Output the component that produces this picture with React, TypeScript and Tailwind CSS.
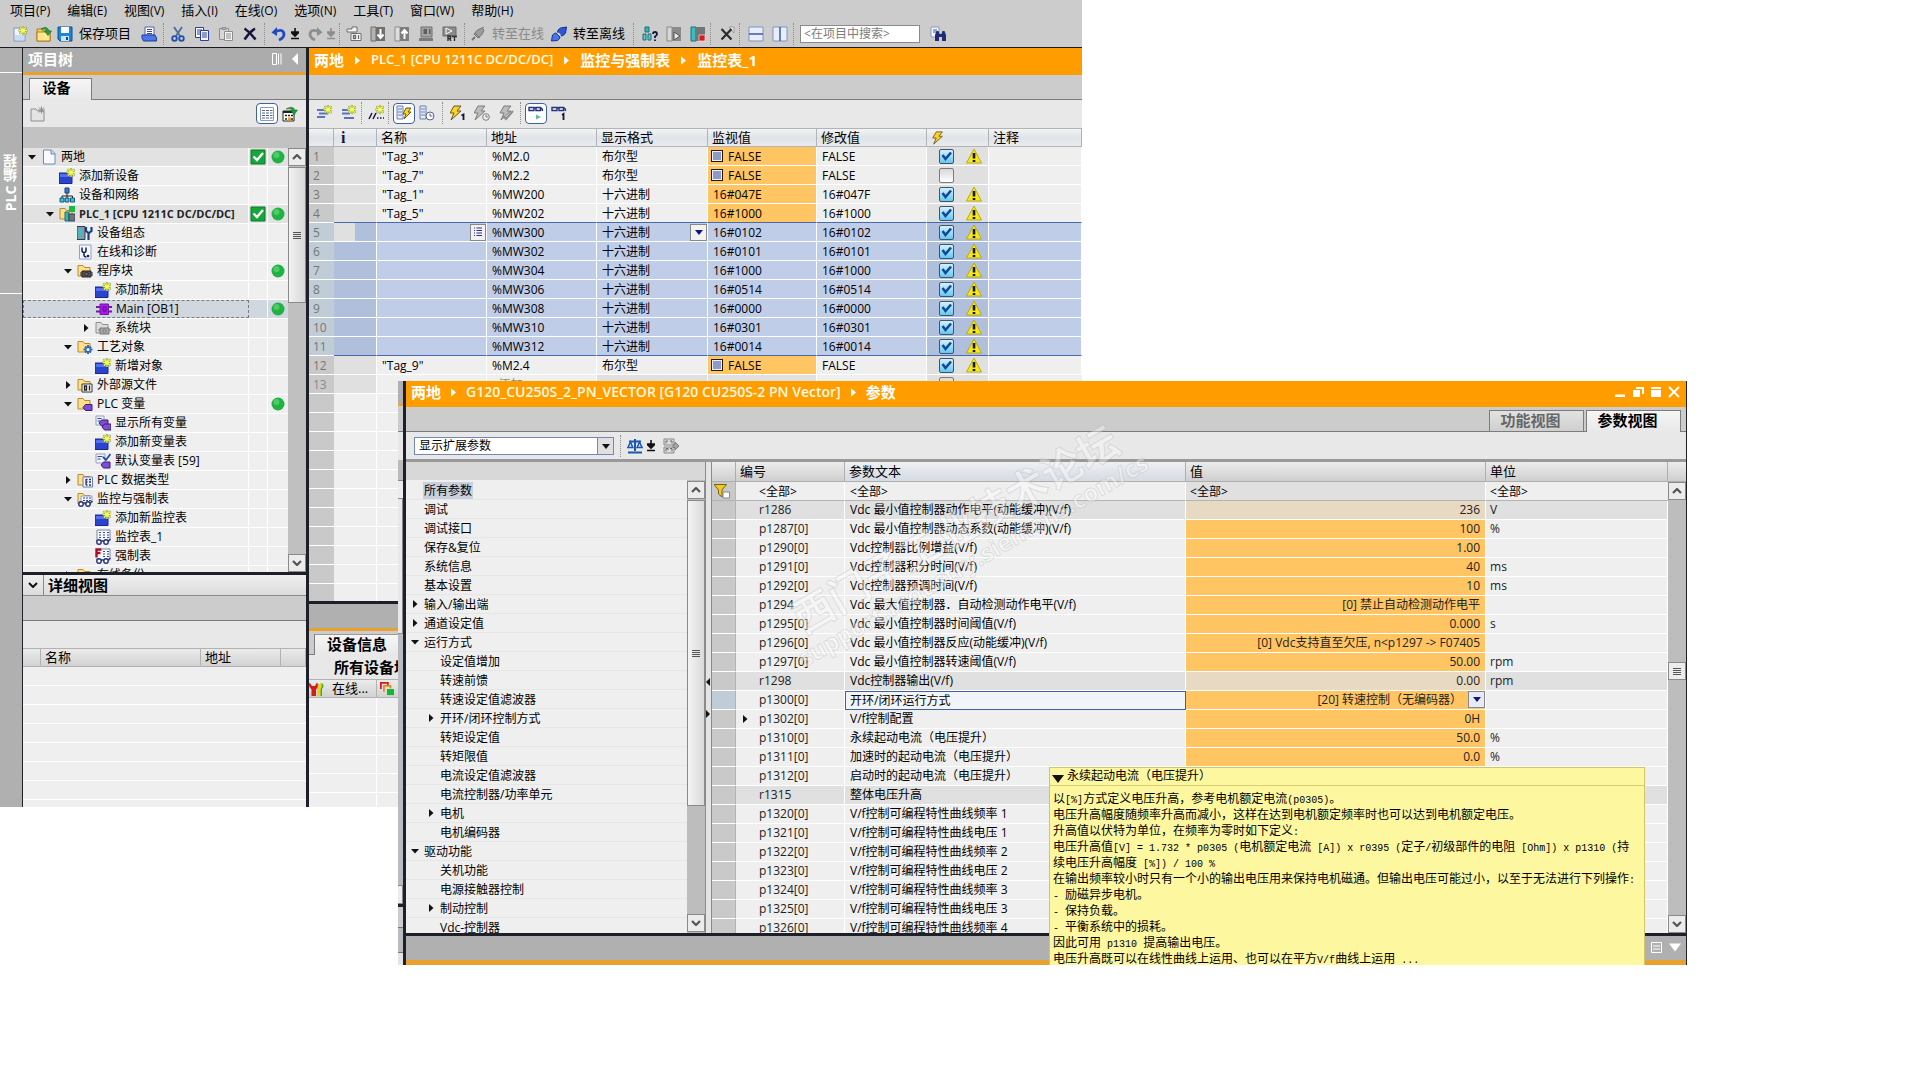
import React from "react";

/* ---------- icons ---------- */

const Star = ({ x = 11, y = 4.5 }: { x?: number; y?: number }) => (
  <g stroke="#6d7f22" strokeWidth="2" strokeLinecap="round">
    <path d={`M${x - 3.8} ${y}h7.6M${x} ${y - 3.8}v7.6M${x - 2.7} ${y - 2.7}l5.4 5.4M${x + 2.7} ${y - 2.7}l-5.4 5.4`} />
    <path
      d={`M${x - 3.8} ${y}h7.6M${x} ${y - 3.8}v7.6M${x - 2.7} ${y - 2.7}l5.4 5.4M${x + 2.7} ${y - 2.7}l-5.4 5.4`}
      stroke="#eefa66"
      strokeWidth="1.3"
    />
  </g>
);
const Folder = ({ gray = false }: { gray?: boolean }) => (
  <path
    d="M1 2.500h5l1.500 2H13V13H1z"
    fill={gray ? "#dcdcdc" : "#ffe08a"}
    stroke={gray ? "#8d8d8d" : "#b98a2c"}
  />
);
const Glasses = () => (
  <g fill="#fff" stroke="#26317c" strokeWidth="1.4">
    <circle cx="4" cy="13" r="2.2" />
    <circle cx="11" cy="13" r="2.2" />
    <path d="M6.2 12.4q1.2-1 2.6 0M13 12l2.4-2" fill="none" />
  </g>
);
const Sheet = () => (
  <g>
    <path d="M2 1h13v11H2z" fill="#f7f8fc" stroke="#7b86ad" />
    <path d="M4 3.5h2M8 3.5h2M12 3.5h2M4 6h2M8 6h2M12 6h2M4 8.500h2M8 8.500h2M12 8.500h2" stroke="#3b4a86" />
  </g>
);
const Tag = ({ x = 7, y = 9 }: { x?: number; y?: number }) => (
  <path d={`M${x} ${y + 3}l2.500-3h6.500v6h-6.500z`} fill="#7d4fd0" stroke="#3c1d7d" />
);
const Bolt = ({ gray = false }: { gray?: boolean }) => (
  <path
    d="M6 1h7L9 6h4L3 15l3-7H2z"
    fill={gray ? "#bdbdbd" : "#f7d32c"}
    stroke={gray ? "#7c7c7c" : "#6f5710"}
  />
);

const icons: Record<string, React.ReactNode> = {
  newProject: (
    <g>
      <path d="M2 2h7l4 4v9H2z" fill="#f2f7ff" stroke="#7c94c4" />
      <path d="M3 9h9v5H3z" fill="#c9dbf6" />
      <Star />
    </g>
  ),
  open: (
    <g>
      <path d="M1 3h5l1 2h7v10H1z" fill="#f6cf5c" stroke="#b07c1c" />
      <path d="M1 6h13v9H1z" fill="#ffe791" stroke="#b07c1c" />
      <path d="M5 3q6-4 8 2h2.500L12 9.500 8.500 5H11Q9.500 2 5 3z" fill="#23a33a" stroke="#0c6a20" strokeWidth=".6" />
    </g>
  ),
  save: (
    <g>
      <path d="M1 1h14v14H3l-2-2z" fill="#1f86d6" stroke="#0d4c94" />
      <path d="M4 1h8v6H4z" fill="#fff" />
      <path d="M4 10h8v5H4z" fill="#cfe4f6" />
      <path d="M9 11h2v3H9z" fill="#0d4c94" />
    </g>
  ),
  print: (
    <g>
      <path d="M4 1h9v8H4z" fill="#fff" stroke="#56639c" />
      <path d="M6 3.500h5M6 5.500h5M6 7.500h5" stroke="#3449a0" />
      <path d="M1 9h13l1.500 3v3H2.500L1 12z" fill="#4d76e6" stroke="#1b3ba0" />
    </g>
  ),
  cut: (
    <g fill="none" strokeWidth="1.8">
      <path d="M4 1l6 9M12 1L6 10" stroke="#4a6c98" />
      <circle cx="4.500" cy="12.500" r="2.300" stroke="#1c4fae" />
      <circle cx="11.500" cy="12.500" r="2.300" stroke="#1c4fae" />
    </g>
  ),
  copy: (
    <g stroke="#2b3f9a">
      <path d="M1.500 1.500h8v10h-8z" fill="#fff" />
      <path d="M3 4h5M3 6h5M3 8h5" />
      <path d="M6.500 4.500h8v10h-8z" fill="#f4f7ff" />
      <path d="M8 7h5M8 9h5M8 11h5" />
    </g>
  ),
  paste: (
    <g stroke="#8c8c8c">
      <path d="M1.500 2.500h9v11h-9z" fill="#d8d8d8" />
      <path d="M4 1.500h4v2H4z" fill="#bbb" />
      <path d="M6.500 5.500h8v9h-8z" fill="#f6f6f6" />
      <path d="M8 8h5M8 10h5M8 12h5" />
    </g>
  ),
  x: <path d="M2.500 2.500q6 4 11 11M13 2.500q-6 4-10.500 11" stroke="#14143c" strokeWidth="2.400" fill="none" />,
  undo: (
    <g>
      <path d="M4 6q8-4 9 2 0 4-5 6" fill="none" stroke="#2249c4" strokeWidth="2.800" />
      <path d="M.5 6.500L6 1v9z" fill="#2249c4" />
    </g>
  ),
  redo: (
    <g>
      <path d="M12 6q-8-4-9 2 0 4 5 6" fill="none" stroke="#8e8e8e" strokeWidth="2.800" />
      <path d="M15.500 6.500L10 1v9z" fill="#8e8e8e" />
    </g>
  ),
  compile: (
    <g stroke="#6c6c6c">
      <path d="M1 3h5V1h5v5H1z" fill="#f4f4f4" />
      <path d="M5 7.500h10v7H5z" fill="#fff" />
      <path d="M7.500 9.500h2v3h-2zM12.500 9v4" fill="none" strokeWidth="1.400" />
    </g>
  ),
  download: (
    <g>
      <path d="M1 1h5v14H1z" fill="#b4b4b4" stroke="#6b6b6b" />
      <path d="M6 1h9v14H6z" fill="#6f6f6f" />
      <path d="M10.500 3v8M7.500 8.500l3 3.500 3-3.500" stroke="#fff" strokeWidth="2" fill="none" />
    </g>
  ),
  upload: (
    <g>
      <path d="M1 1h5v14H1z" fill="#dedede" stroke="#8b8b8b" />
      <path d="M6 1h9v14H6z" fill="#7d7d7d" />
      <path d="M10.500 13V5M7.500 7.500l3-3.500 3 3.500" stroke="#fff" strokeWidth="2" fill="none" />
    </g>
  ),
  sim: (
    <g>
      <path d="M3 1h11v10H3z" fill="#a4a4a4" stroke="#6f6f6f" />
      <path d="M5.500 3h3.500v5H5.500zM11 3h1.500v5H11z" fill="#5f5f5f" />
      <path d="M1 12h14v3H1z" fill="#7b7b7b" />
    </g>
  ),
  rt: (
    <g>
      <path d="M1 1h13v9H1z" fill="#8a8a8a" stroke="#6a6a6a" />
      <path d="M4 2l6 3-6 3z" fill="none" stroke="#fff" />
      <path d="M6 15v-5h2.500v2.500H6M7.500 12.500L9 15M10 10.500h5M12.500 10.500V15" stroke="#2f2f2f" strokeWidth="1.400" fill="none" />
    </g>
  ),
  plugGray: (
    <g>
      <path d="M2 14l3-3" stroke="#777" strokeWidth="2" />
      <path d="M4 8q3-5 8-6l2 2q-1 5-6 8z" fill="#9c9c9c" stroke="#777" />
      <path d="M5 7l5 5M12 2l2-1" stroke="#777" />
    </g>
  ),
  plugBlue: (
    <g strokeLinejoin="round">
      <path d="M15.500 1l-1 6q-2 3-4 3L6.500 6q0-2.500 3-4z" fill="#3454d4" stroke="#15308f" />
      <path d="M.5 15l1-6q2-2 3.500-2L9 11q0 2-2.500 3.500z" fill="#4d74ea" stroke="#15308f" />
      <path d="M7 7l2.500 2.500" stroke="#dfe8ff" strokeWidth="1.500" />
    </g>
  ),
  access: (
    <g>
      <path d="M3 1h4v5H3z" fill="#35b7b0" stroke="#1b6f78" />
      <path d="M1 8h3v6H1zM6 8h3v6H6z" fill="#58c8c2" stroke="#1b6f78" />
      <path d="M11 8q0-2 2-2t2 2q0 1.500-2 2.500v1.500M13 13.500v1.500" stroke="#14143c" strokeWidth="1.800" fill="none" />
    </g>
  ),
  startCpu: (
    <g>
      <path d="M1 1h5v14H1z" fill="#d7d7d7" stroke="#888" />
      <path d="M6 1h9v14H6z" fill="#8a8a8a" />
      <path d="M8 6l6 4-6 4z" fill="#e9e9e9" stroke="#555" />
    </g>
  ),
  stopCpu: (
    <g>
      <path d="M1 1h5v14H1z" fill="#37c0bd" stroke="#1b6f78" />
      <path d="M6 1h9v14H6z" fill="#70767a" />
      <path d="M9 9h6v6H9z" fill="#e11717" stroke="#fff" strokeWidth=".6" />
    </g>
  ),
  cross: (
    <g>
      <path d="M10 1h5v6z" fill="#eee" stroke="#999" />
      <path d="M2.500 3l10 10.500M12.500 3l-10 10.500" stroke="#2b2b2b" strokeWidth="2.200" />
    </g>
  ),
  splitH: (
    <g stroke="#8290c4">
      <path d="M1 1h14v14H1z" fill="#e9eefb" />
      <path d="M1 8h14" stroke="#4052a8" strokeWidth="1.500" />
    </g>
  ),
  splitV: (
    <g stroke="#8290c4">
      <path d="M1 1h14v14H1z" fill="#e9eefb" />
      <path d="M8 1v14" stroke="#4052a8" strokeWidth="1.500" />
    </g>
  ),
  find: (
    <g>
      <path d="M1 1h8v10H1z" fill="#f2f5fc" stroke="#8c99c6" />
      <path d="M3 4h4M3 6h4" stroke="#4052a8" />
      <path d="M5 15V9l1.500-4h2L9.500 8h2l1-3h2L16 9v6h-4v-4H9v4z" fill="#1f2b73" />
    </g>
  ),
  folderNew: (
    <g>
      <path d="M1 3h5l1.500 2H14v10H1z" fill="#e4e4e4" stroke="#8c8c8c" />
      <path d="M8 4h7M11.500 .5v7M9 1.500l5 5M14 1.500l-5 5" stroke="#8c8c8c" />
    </g>
  ),
  listView: (
    <g>
      <path d="M1.500 1.500h13v13h-13z" fill="#fff" stroke="#8a99c4" />
      <path d="M3 4.500h3M7 4.500h3M11 4.500h2.500M3 7h3M7 7h3M11 7h2.500M3 9.500h3M7 9.500h3M11 9.500h2.500M3 12h3M7 12h3M11 12h2.500" stroke="#51628f" />
    </g>
  ),
  gridGo: (
    <g>
      <path d="M1 5h11v10H1z" fill="#fff" stroke="#222" />
      <path d="M1 5h11v2H1z" fill="#222" />
      <path d="M3 9.500h2M6 9.500h2M9 9.500h2M3 13h2M9 13h2" stroke="#222" strokeWidth="1.500" />
      <path d="M6 11.500h3v3H6z" fill="#f09a20" />
      <path d="M4 3q7-4 9 1h2.500L12 9 8.500 4H11Q9 2 4 3z" fill="#1f9c38" stroke="#0c6a20" strokeWidth=".5" />
    </g>
  ),
  rowAdd: (
    <g>
      <path d="M1 5h8M3 8.500h9M1 12h8" stroke="#5975c0" strokeWidth="2" />
      <Star x={12} />
    </g>
  ),
  rowIns: (
    <g>
      <path d="M2 5h6M2 8.500h8M4 13h10" stroke="#5975c0" strokeWidth="2" />
      <Star x={12} />
    </g>
  ),
  comment: (
    <g>
      <path d="M1 14l3-6M5 14l3-6" stroke="#14143c" strokeWidth="1.500" />
      <path d="M9 13h1.500M12 13h1.500M15 13h1" stroke="#14143c" strokeWidth="1.500" />
      <Star x={12} />
    </g>
  ),
  listBolt: (
    <g>
      <path d="M1 1h6v13H1z" fill="#e5ebf9" stroke="#6a7db5" />
      <path d="M2 4h4M2 7h4M2 10h4" stroke="#6a7db5" />
      <path d="M10 3h5l-3 4h3l-7 7 2-5H7z" fill="#f7d32c" stroke="#6f5710" />
    </g>
  ),
  listClock: (
    <g>
      <path d="M1 1h6v13H1z" fill="#e5ebf9" stroke="#6a7db5" />
      <path d="M2 4h4M2 7h4M2 10h4" stroke="#6a7db5" />
      <circle cx="11" cy="11" r="4" fill="#fff" stroke="#51628f" />
      <path d="M11 8.500V11h2.500" stroke="#51628f" fill="none" />
    </g>
  ),
  bolt: <Bolt />,
  bolt1: (
    <g>
      <g transform="translate(-2 0)">
        <Bolt />
      </g>
      <path d="M11.500 10.500l2-1V15" stroke="#14143c" strokeWidth="1.800" fill="none" />
    </g>
  ),
  boltClock: (
    <g>
      <g transform="translate(-2 0)">
        <Bolt gray />
      </g>
      <circle cx="12" cy="12" r="3.300" fill="#eee" stroke="#7c7c7c" />
      <path d="M12 10v2h2" stroke="#7c7c7c" fill="none" />
    </g>
  ),
  boltCheck: (
    <g>
      <Bolt gray />
      <path d="M5 11l3 3 7-8" stroke="#8c8c8c" strokeWidth="2" fill="none" />
    </g>
  ),
  glassPlay: (
    <g>
      <path d="M1 2.500h5v3H1zM8 2.500h4.500v3H8zM6 3h2M12.500 3q2 0 2 3" fill="#fff" stroke="#26317c" strokeWidth="1.400" />
      <path d="M8 9.500l5 2.500-5 2.500z" fill="#5fc486" />
    </g>
  ),
  glassOne: (
    <g>
      <path d="M1 2.500h5v3H1zM8 2.500h4.500v3H8zM6 3h2M12.500 3q2 0 2 3" fill="#fff" stroke="#26317c" strokeWidth="1.400" />
      <path d="M11 10l1.500-1v6" stroke="#14143c" strokeWidth="1.800" fill="none" />
    </g>
  ),
  page: (
    <g>
      <path d="M2.500 1h8l3.500 3.500V15h-11.500z" fill="#f8faff" stroke="#7087b8" />
      <path d="M10 1v4h4" fill="#c6d5f0" stroke="#7087b8" />
    </g>
  ),
  add: (
    <g>
      <path d="M0 5h13v10.500H0z" fill="#2b43cf" stroke="#182a8c" />
      <path d="M1 6h11v3H1z" fill="#5470ee" />
      <Star x={12} />
    </g>
  ),
  network: (
    <g>
      <path d="M8 5v4M3 11V9h10.500v2M8 9v2" stroke="#222" fill="none" />
      <path d="M6 1h4v5H6z" fill="#3c78c8" stroke="#1d3f7c" />
      <path d="M1 11h4v4H1zM6 11h4v4H6zM11.500 11h4v4h-4z" fill="#3fbfcf" stroke="#1d5c7c" />
    </g>
  ),
  plc: (
    <g>
      <Folder />
      <path d="M6 6h4v9H6z" fill="#38b4b4" stroke="#1b6f78" />
      <path d="M10 8h6v7h-6z" fill="#6d757c" stroke="#3c4348" />
      <path d="M10 0h6v6h-6z" fill="#16bf3e" />
    </g>
  ),
  config: (
    <g>
      <path d="M0 1.500h8v13H0z" fill="#8a97a5" stroke="#2f3e50" />
      <path d="M1.500 3H5v10H1.500z" fill="#37c0c6" />
      <path d="M9 2v4l2.500 2v7M14.500 2v4l-2.500 2" stroke="#1d3f7c" strokeWidth="2.200" fill="none" />
    </g>
  ),
  diag: (
    <g>
      <path d="M2.500 1h11.500v14H2.500z" fill="#f4f7ff" stroke="#8ea0cc" />
      <path d="M5 3.500v3q0 2 2 2t2-2v-3M7 9v2q0 2 2.500 2" stroke="#14204c" strokeWidth="1.500" fill="none" />
      <circle cx="11" cy="12" r="1.300" fill="#14204c" />
    </g>
  ),
  blocks: (
    <g>
      <Folder />
      <path d="M5 8h9v6H5z" fill="#555" stroke="#222" />
      <path d="M3 10h2M14 10h2M3 12h2M14 12h2M8 10h3v2H8z" stroke="#222" fill="#ccc" />
    </g>
  ),
  main: (
    <g>
      <path d="M0 6h16M0 10.500h16" stroke="#6d1f9c" strokeWidth="1.800" />
      <path d="M4 3h8.500v10.500H4z" fill="#a51be8" stroke="#7d10b4" />
      <path d="M7 6h3v4H7z" fill="none" stroke="#5b0d86" />
    </g>
  ),
  sysBlocks: (
    <g>
      <Folder gray />
      <path d="M5 8h9v6H5z" fill="#a9a9a9" stroke="#777" />
      <path d="M3 10h2M14 10h2M8 10h3v2H8z" stroke="#777" fill="#ddd" />
    </g>
  ),
  tech: (
    <g>
      <Folder />
      <path d="M11 6v9M6.500 10.500h9M8 7.500l6 6M14 7.500l-6 6" stroke="#2f67b8" strokeWidth="2" />
      <circle cx="11" cy="10.500" r="1.500" fill="#fff" />
    </g>
  ),
  source: (
    <g>
      <Folder />
      <path d="M5 7h10v8H5z" fill="#fff" stroke="#333" />
      <path d="M7.500 9h2v4h-2zM12.500 8.500v5" stroke="#222" fill="none" strokeWidth="1.400" />
    </g>
  ),
  plcVars: (
    <g>
      <Folder />
      <Tag x={6} y={8.500} />
    </g>
  ),
  showVars: (
    <g>
      <path d="M1 1h8v9H1z" fill="#eef2fc" stroke="#8ea0cc" />
      <path d="M2.500 3.500h4M2.500 6h3" stroke="#3b4a86" />
      <Tag x={4} y={5} />
      <Tag x={7} y={9} />
    </g>
  ),
  varTable: (
    <g>
      <path d="M1 1h9v9H1z" fill="#eef2fc" stroke="#8ea0cc" />
      <path d="M2.500 3.500h5M2.500 6h3" stroke="#3b4a86" />
      <path d="M8 4l3 3 4.500-6" stroke="#2249a4" strokeWidth="1.800" fill="none" />
      <Tag x={6} y={9} />
    </g>
  ),
  types: (
    <g>
      <Folder />
      <path d="M6 5h9.500v10H6z" fill="#f1f5ff" stroke="#6a7db5" />
      <path d="M9 7v6M9 7.500h1.500M9 10h1.500M9 13h1.500M12 7.500h2M12 10h2M12 13h2" stroke="#26317c" strokeWidth="1.300" />
    </g>
  ),
  watchFolder: (
    <g>
      <Folder />
      <path d="M4 5h11v7H4z" fill="#f4f7ff" stroke="#8ea0cc" />
      <path d="M6 7h2M9 7h2M12 7h2M6 9.500h2M9 9.500h2M12 9.500h2" stroke="#3b4a86" />
      <Glasses />
    </g>
  ),
  watch: (
    <g>
      <Sheet />
      <Glasses />
    </g>
  ),
  force: (
    <g>
      <Sheet />
      <path d="M0 0h7v10H0z" fill="#f7f8fc" />
      <path d="M1.500 9.500V1.500h5M1.500 5h4" stroke="#a40f24" strokeWidth="2.400" fill="none" />
      <Glasses />
    </g>
  ),
  folder: <Folder />,
  balance: (
    <g stroke="#1d56b0" fill="none" strokeWidth="1.500">
      <path d="M8 1v12M2 3.500h12M1 14.500h14" strokeWidth="2" />
      <path d="M3.500 4L.8 9.500h5zM12.500 4l-2.400 5.500h5z" fill="#cfe0f6" />
    </g>
  ),
  paramGo: (
    <g>
      <path d="M1 1h10v6H1zM1 9h10v6H1z" fill="#ddd" stroke="#8a8a8a" />
      <path d="M3 5.500V3h2M7 3h2v2.500M3 13.500v-3h2v1.500M7 10.500h2v3" stroke="#666" fill="none" />
      <path d="M10 6.500h2V4l4 4-4 4V9.500h-2z" fill="#a5a5a5" stroke="#7f7f7f" />
    </g>
  ),
  filter: (
    <g>
      <path d="M0 1.500h12.500L8 7v7l-3.500-3V7z" fill="#f2c822" stroke="#7d6410" />
      <path d="M9 9h6.500v6H9z" fill="#fff" stroke="#888" />
    </g>
  ),
  warn: (
    <g>
      <path d="M8 1l7.500 14H.5z" fill="#f6e81c" stroke="#b9ab10" />
      <path d="M8 5v5.500M8 12v2" stroke="#16160a" strokeWidth="2.600" />
    </g>
  ),
  ok: (
    <g>
      <path d="M1 1h14v14H1z" fill="#17a63b" stroke="#0d7a28" />
      <path d="M3.500 7.500l3.500 3.500L13 4" stroke="#fff" strokeWidth="2.400" fill="none" />
    </g>
  ),
  dot: (
    <g>
      <circle cx="8" cy="8" r="6.500" fill="#22b145" />
      <circle cx="6.500" cy="6" r="3" fill="#4ccb68" />
    </g>
  ),
  wrench: (
    <g strokeLinejoin="round">
      <path d="M10 15V8Q8 6.500 8 2l2.500 2.500L13 2q3 3 0 6v7z" fill="#35b23c" />
      <path d="M8 15V8Q6 6 7 2l2 2.500L12 2q2 3-.500 6v7z" fill="#f2cf1d" />
      <path d="M2.500 15V8.500Q-1 6 .5 1.500L3 5h3l2-3.500Q10 6 7 8.500V15z" fill="#d01c1c" />
    </g>
  ),
  squares: (
    <g>
      <path d="M1 8V1h8v3M1 1h8" stroke="#d01c1c" strokeWidth="2" fill="none" />
      <path d="M4.500 11V4.500H12V7" stroke="#e88b18" strokeWidth="2" fill="none" />
      <path d="M8 8h8v7H8z" fill="#12b83c" />
    </g>
  ),
};

const Icon = ({ n, s = 16 }: { n: string; s?: number }) => (
  <svg viewBox="0 0 16 16" width={s} height={s} className="shrink-0" aria-hidden="true">
    {icons[n]}
  </svg>
);

/* ---------- small parts ---------- */

const Tool = ({ n, label, on }: { n: string; label: string; on?: boolean }) => (
  <button
    aria-label={label}
    className={
      on
        ? "flex h-[21px] w-[22px] shrink-0 items-center justify-center rounded-sm border border-[#3c62a4] bg-white"
        : "flex h-[21px] w-6 shrink-0 items-center justify-center"
    }
  >
    <Icon n={n} />
  </button>
);
const Sep = () => <span className="h-[22px] shrink-0 border-l border-dotted border-[#8c8c8c]" />;
const UpDown = ({ gray }: { gray?: boolean }) => (
  <svg viewBox="0 0 8 12" width="8" height="12" className="shrink-0" aria-hidden="true">
    <path d="M4 0v4M0 4h8L4 8zM0 10.500h8" fill={gray ? "#8e8e8e" : "#111"} stroke={gray ? "#8e8e8e" : "#111"} strokeWidth="1.600" />
  </svg>
);
const Chevron = () => (
  <svg viewBox="0 0 6 10" width="5" height="9" className="shrink-0" aria-hidden="true">
    <path d="M0 0l6 5-6 5z" fill="#fff" />
  </svg>
);
const Twist = ({ open }: { open: boolean }) => (
  <svg viewBox="0 0 10 10" width="10" height="10" className="shrink-0" aria-hidden="true">
    <path d={open ? "M1 3h8L5 7.500z" : "M3 1v8l4.500-4z"} fill="#111" />
  </svg>
);

const ScrollBtn = ({ up }: { up?: boolean }) => (
  <button
    aria-label={up ? "Scroll up" : "Scroll down"}
    className="flex h-[18px] w-full shrink-0 items-center justify-center border border-[#8a8a8a] bg-[#ececec]"
  >
    <svg viewBox="0 0 10 6" width="10" height="6" aria-hidden="true">
      <path d={up ? "M1 5l4-4 4 4" : "M1 1l4 4 4-4"} stroke="#555" strokeWidth="2.200" fill="none" />
    </svg>
  </button>
);
const Grip = () => (
  <span className="flex w-2 flex-col gap-px">
    <i className="h-px bg-[#555]" />
    <i className="h-px bg-[#555]" />
    <i className="h-px bg-[#555]" />
    <i className="h-px bg-[#555]" />
  </span>
);

const Check = ({ on, label }: { on: boolean; label: string }) => (
  <label className="relative flex h-[15px] w-[15px] shrink-0">
    <input
      type="checkbox"
      aria-label={label}
      defaultChecked={on}
      className="peer h-full w-full appearance-none rounded-xs border border-[#7c7c7c] bg-linear-to-b from-[#d8d8d8] to-white checked:border-[#3f5568] checked:from-[#d4effc] checked:to-[#62c8f2]"
    />
    <svg viewBox="0 0 15 15" className="pointer-events-none absolute inset-0 hidden peer-checked:block" aria-hidden="true">
      <path d="M3.500 6l3 4L12 3.500" stroke="#0d4a9c" strokeWidth="2.600" fill="none" />
    </svg>
  </label>
);

/* ---------- data ---------- */

type Node = { t: string; l: number; i: string; o?: boolean; ok?: boolean; dot?: boolean; bold?: boolean; sel?: boolean };
const tree: Node[] = [
  { t: "两地", l: 0, i: "page", o: true, ok: true, dot: true },
  { t: "添加新设备", l: 1, i: "add" },
  { t: "设备和网络", l: 1, i: "network" },
  { t: "PLC_1 [CPU 1211C DC/DC/DC]", l: 1, i: "plc", o: true, ok: true, dot: true, bold: true },
  { t: "设备组态", l: 2, i: "config" },
  { t: "在线和诊断", l: 2, i: "diag" },
  { t: "程序块", l: 2, i: "blocks", o: true, dot: true },
  { t: "添加新块", l: 3, i: "add" },
  { t: "Main [OB1]", l: 3, i: "main", dot: true, sel: true },
  { t: "系统块", l: 3, i: "sysBlocks", o: false },
  { t: "工艺对象", l: 2, i: "tech", o: true },
  { t: "新增对象", l: 3, i: "add" },
  { t: "外部源文件", l: 2, i: "source", o: false },
  { t: "PLC 变量", l: 2, i: "plcVars", o: true, dot: true },
  { t: "显示所有变量", l: 3, i: "showVars" },
  { t: "添加新变量表", l: 3, i: "add" },
  { t: "默认变量表 [59]", l: 3, i: "varTable" },
  { t: "PLC 数据类型", l: 2, i: "types", o: false },
  { t: "监控与强制表", l: 2, i: "watchFolder", o: true },
  { t: "添加新监控表", l: 3, i: "add" },
  { t: "监控表_1", l: 3, i: "watch" },
  { t: "强制表", l: 3, i: "force" },
  { t: "在线备份", l: 2, i: "folder", o: false },
];
const indent = ["pl-1", "pl-[22px]", "pl-10", "pl-[58px]"];

const watch: [string, string, string, string, string, boolean][] = [
  ['"Tag_3"', "%M2.0", "布尔型", "FALSE", "FALSE", true],
  ['"Tag_7"', "%M2.2", "布尔型", "FALSE", "FALSE", false],
  ['"Tag_1"', "%MW200", "十六进制", "16#047E", "16#047F", true],
  ['"Tag_5"', "%MW202", "十六进制", "16#1000", "16#1000", true],
  ["", "%MW300", "十六进制", "16#0102", "16#0102", true],
  ["", "%MW302", "十六进制", "16#0101", "16#0101", true],
  ["", "%MW304", "十六进制", "16#1000", "16#1000", true],
  ["", "%MW306", "十六进制", "16#0514", "16#0514", true],
  ["", "%MW308", "十六进制", "16#0000", "16#0000", true],
  ["", "%MW310", "十六进制", "16#0301", "16#0301", true],
  ["", "%MW312", "十六进制", "16#0014", "16#0014", true],
  ['"Tag_9"', "%M2.4", "布尔型", "FALSE", "FALSE", true],
];

const groups: { t: string; l?: number; o?: boolean }[] = [
  { t: "所有参数" },
  { t: "调试" },
  { t: "调试接口" },
  { t: "保存&复位" },
  { t: "系统信息" },
  { t: "基本设置" },
  { t: "输入/输出端", o: false },
  { t: "通道设定值", o: false },
  { t: "运行方式", o: true },
  { t: "设定值增加", l: 1 },
  { t: "转速前馈", l: 1 },
  { t: "转速设定值滤波器", l: 1 },
  { t: "开环/闭环控制方式", l: 1, o: false },
  { t: "转矩设定值", l: 1 },
  { t: "转矩限值", l: 1 },
  { t: "电流设定值滤波器", l: 1 },
  { t: "电流控制器/功率单元", l: 1 },
  { t: "电机", l: 1, o: false },
  { t: "电机编码器", l: 1 },
  { t: "驱动功能", o: true },
  { t: "关机功能", l: 1 },
  { t: "电源接触器控制", l: 1 },
  { t: "制动控制", l: 1, o: false },
  { t: "Vdc-控制器", l: 1 },
];

const params: [string, string, string, string][] = [
  ["r1286", "Vdc 最小值控制器动作电平(动能缓冲)(V/f)", "236", "V"],
  ["p1287[0]", "Vdc 最小值控制器动态系数(动能缓冲)(V/f)", "100", "%"],
  ["p1290[0]", "Vdc控制器比例增益(V/f)", "1.00", ""],
  ["p1291[0]", "Vdc控制器积分时间(V/f)", "40", "ms"],
  ["p1292[0]", "Vdc控制器预调时间(V/f)", "10", "ms"],
  ["p1294", "Vdc 最大值控制器．自动检测动作电平(V/f)", "[0] 禁止自动检测动作电平", ""],
  ["p1295[0]", "Vdc 最小值控制器时间阈值(V/f)", "0.000", "s"],
  ["p1296[0]", "Vdc 最小值控制器反应(动能缓冲)(V/f)", "[0] Vdc支持直至欠压, n<p1297 -> F07405", ""],
  ["p1297[0]", "Vdc 最小值控制器转速阈值(V/f)", "50.00", "rpm"],
  ["r1298", "Vdc控制器输出(V/f)", "0.00", "rpm"],
  ["p1300[0]", "开环/闭环运行方式", "[20] 转速控制（无编码器）", ""],
  ["p1302[0]", "V/f控制配置", "0H", ""],
  ["p1310[0]", "永续起动电流（电压提升）", "50.0", "%"],
  ["p1311[0]", "加速时的起动电流（电压提升）", "0.0", "%"],
  ["p1312[0]", "启动时的起动电流（电压提升）", "", ""],
  ["r1315", "整体电压升高", "", ""],
  ["p1320[0]", "V/f控制可编程特性曲线频率 1", "", ""],
  ["p1321[0]", "V/f控制可编程特性曲线电压 1", "", ""],
  ["p1322[0]", "V/f控制可编程特性曲线频率 2", "", ""],
  ["p1323[0]", "V/f控制可编程特性曲线电压 2", "", ""],
  ["p1324[0]", "V/f控制可编程特性曲线频率 3", "", ""],
  ["p1325[0]", "V/f控制可编程特性曲线电压 3", "", ""],
  ["p1326[0]", "V/f控制可编程特性曲线频率 4", "", ""],
];

const help = [
  "以[%]方式定义电压升高，参考电机额定电流(p0305)。",
  "电压升高幅度随频率升高而减小，这样在达到电机额定频率时也可以达到电机额定电压。",
  "升高值以伏特为单位，在频率为零时如下定义:",
  "电压升高值[V] = 1.732 * p0305 (电机额定电流 [A]) x r0395 (定子/初级部件的电阻 [Ohm]) x p1310 (持",
  "续电压升高幅度 [%]) / 100 %",
  "在输出频率较小时只有一个小的输出电压用来保持电机磁通。但输出电压可能过小，以至于无法进行下列操作:",
  "- 励磁异步电机。",
  "- 保持负载。",
  "- 平衡系统中的损耗。",
  "因此可用 p1310 提高输出电压。",
  "电压升高既可以在线性曲线上运用、也可以在平方V/f曲线上运用 ...",
];
const MonoMix = ({ text }: { text: string }) => (
  <>
    {text.split(/([\x20-\x7e]+)/).map((s, i) =>
      /^[\x20-\x7e]+$/.test(s) ? (
        <span key={i} className="font-['Liberation_Mono',monospace] text-[10px]">
          {s}
        </span>
      ) : (
        s
      ),
    )}
  </>
);

/* ---------- main window ---------- */

const menus = ["项目(P)", "编辑(E)", "视图(V)", "插入(I)", "在线(O)", "选项(N)", "工具(T)", "窗口(W)", "帮助(H)"];

function MenuAndToolbar() {
  return (
    <header className="border-b border-[#1a1a22] bg-[#ccc]">
      <nav className="flex h-[22px] items-start gap-[17px] pl-[10px] text-[13px] leading-5">
        {menus.map((m) => (
          <button key={m} className="whitespace-nowrap">
            {m.slice(0, 2)}
            <span className="text-xs">{m.slice(2)}</span>
          </button>
        ))}
      </nav>
      <div className="flex h-[25px] items-center pb-[2px] pl-2 text-[13px]">
        <Tool n="newProject" label="新建项目" />
        <Tool n="open" label="打开项目" />
        <button className="flex items-center gap-[6px] whitespace-nowrap pl-px">
          <Icon n="save" />
          保存项目
        </button>
        <span className="w-[6px]" />
        <Tool n="print" label="打印" />
        <span className="w-[2px]" />
        <Sep />
        <span className="w-[2px]" />
        <Tool n="cut" label="剪切" />
        <Tool n="copy" label="复制" />
        <Tool n="paste" label="粘贴" />
        <Tool n="x" label="删除" />
        <span className="w-[2px]" />
        <Sep />
        <span className="w-[2px]" />
        <Tool n="undo" label="撤销" />
        <UpDown />
        <span className="w-1" />
        <Tool n="redo" label="重做" />
        <UpDown gray />
        <span className="w-1" />
        <Sep />
        <span className="w-[2px]" />
        <Tool n="compile" label="编译" />
        <Tool n="download" label="下载" />
        <Tool n="upload" label="上传" />
        <Tool n="sim" label="仿真" />
        <Tool n="rt" label="运行系统" />
        <span className="w-[2px]" />
        <Sep />
        <button className="flex items-center gap-[6px] whitespace-nowrap pl-[5px] text-[#8a8a8a]">
          <Icon n="plugGray" />
          转至在线
        </button>
        <button className="flex items-center gap-[6px] whitespace-nowrap pl-[7px]">
          <Icon n="plugBlue" />
          转至离线
        </button>
        <span className="w-2" />
        <Sep />
        <span className="w-1" />
        <Tool n="access" label="可访问的设备" />
        <Tool n="startCpu" label="启动 CPU" />
        <Tool n="stopCpu" label="停止 CPU" />
        <Sep />
        <span className="w-1" />
        <Tool n="cross" label="交叉引用" />
        <Sep />
        <span className="w-1" />
        <Tool n="splitH" label="水平拆分" />
        <Tool n="splitV" label="垂直拆分" />
        <span className="w-px" />
        <Sep />
        <span className="w-[6px]" />
        <input
          aria-label="在项目中搜索"
          placeholder="<在项目中搜索>"
          className="h-[18px] w-[120px] border border-[#8a8a8a] bg-white px-[3px] text-xs placeholder:text-[#7c7c7c]"
        />
        <span className="w-[6px]" />
        <Tool n="find" label="查找" />
      </div>
    </header>
  );
}

function ProjectTree() {
  return (
    <aside className="flex w-[284px] shrink-0 flex-col border-l border-[#1f222b] bg-[#efefef]">
      <div className="flex h-[27px] items-center border-b-[3px] border-[#eaa02c] bg-[#acacac] pb-[2px] pl-[5px] pr-2 text-[15px] font-bold leading-[22px] text-white">
        项目树
        <span className="ml-auto flex items-center gap-[10px]">
          <svg viewBox="0 0 10 12" width="10" height="12" aria-hidden="true">
            <path d="M.5 .5h4v11h-4zM6.500 .5v11M9 .5v11" stroke="#fff" fill="none" />
          </svg>
          <svg viewBox="0 0 6 12" width="6" height="12" aria-hidden="true">
            <path d="M6 0v12L0 6z" fill="#fff" />
          </svg>
        </span>
      </div>
      <div className="flex h-[25px] items-end border-b border-[#7c7c7c] bg-[#ccc] pl-[6px]">
        <button className="-mb-px h-[22px] w-[63px] border border-b-0 border-[#7c7c7c] bg-linear-to-b from-[#f6f6f6] to-[#e8e8e8] pb-[3px] pr-2 text-sm font-bold leading-[18px]">
          设备
        </button>
      </div>
      <div className="flex h-[27px] items-center bg-[#e8e8e8] pl-[3px] pr-1">
        <Tool n="folderNew" label="新建文件夹" />
        <span className="ml-auto" />
        <Tool n="listView" label="详细列表" on />
        <Tool n="gridGo" label="转到" />
      </div>
      <div className="h-[21px] bg-[#c2c2c2]" />
      <div className="flex h-[424px] overflow-hidden">
        <ul className="min-w-0 flex-1 text-xs leading-[18px]">
          {tree.map((n, k) => (
            <li
              key={k}
              className={
                n.sel
                  ? "flex h-[19px] border-b border-white bg-[#d0d7de]"
                  : n.ok
                    ? "flex h-[19px] border-b border-white bg-[#e2e2e2]"
                    : "flex h-[19px] border-b border-white bg-[#efefef]"
              }
            >
              <div
                className={`flex min-w-0 flex-1 items-center whitespace-nowrap ${indent[n.l]} ${
                  n.sel ? "border border-dashed border-[#7a7a7a]" : "border-r border-white"
                }`}
              >
                {n.o === undefined ? <span className="w-[10px] shrink-0" /> : <Twist open={n.o} />}
                <span className="w-1 shrink-0" />
                <Icon n={n.i} />
                <span className={n.bold ? "pl-1 text-[11px] font-bold text-[#222]" : "pl-1"}>{n.t}</span>
              </div>
              <span className="flex w-[19px] items-center justify-center border-r border-white">{n.ok && <Icon n="ok" />}</span>
              <span className="flex w-[20px] items-center justify-center">{n.dot && <Icon n="dot" />}</span>
            </li>
          ))}
        </ul>
        <div className="flex w-[18px] flex-col bg-[#c0c0c0]">
          <ScrollBtn up />
          <div className="mt-px flex h-[136px] items-center justify-center border border-[#8a8a8a] bg-linear-to-r from-[#f2f2f2] to-[#d8d8d8]">
            <Grip />
          </div>
          <span className="flex-1" />
          <ScrollBtn />
        </div>
      </div>
      <div className="flex h-6 items-center border-b border-t-[3px] border-b-[#8a8a8a] border-t-[#1d2029] bg-linear-to-b from-[#efefef] to-[#dcdcdc] text-[15px] font-bold leading-[18px]">
        <button aria-label="折叠" className="flex h-full w-[21px] items-center justify-center border-r border-[#8a8a8a]">
          <svg viewBox="0 0 10 6" width="10" height="6" aria-hidden="true">
            <path d="M1 1l4 4 4-4" stroke="#111" strokeWidth="2" fill="none" />
          </svg>
        </button>
        <span className="pb-px pl-1">详细视图</span>
      </div>
      <div className="h-[25px] border-b border-[#7c7c7c] bg-[#ccc]" />
      <div className="h-[27px] bg-[#e8e8e8]" />
      <div className="flex-1">
        <table className="w-full table-fixed border-separate border-spacing-0 text-[13px] leading-[17px]">
          <colgroup>
            <col className="w-[18px]" />
            <col />
            <col className="w-[80px]" />
            <col className="w-[25px]" />
          </colgroup>
          <thead>
            <tr>
              {["", "名称", "地址", ""].map((h, k) => (
                <th
                  key={k}
                  className="h-[19px] border-y border-r border-[#b2b2b2] bg-linear-to-b from-[#ebebeb] to-[#d2d2d2] p-0 pl-1 text-left font-normal"
                >
                  {h}
                </th>
              ))}
            </tr>
          </thead>
          <tbody>
            {Array.from({ length: 7 }, (_, k) => (
              <tr key={k}>
                <td colSpan={4} className="h-[19px] border-b border-white bg-[#efefef] p-0" />
              </tr>
            ))}
          </tbody>
        </table>
      </div>
    </aside>
  );
}

const wHead =
  "h-[19px] border-y border-r border-[#b0b3b8] bg-linear-to-b from-[#f4f4f4] via-[#dfe3e8] to-[#e9ebee] p-0 pl-1 text-left font-normal";

function WatchTable() {
  return (
    <table className="w-full table-fixed border-separate border-spacing-0 text-xs leading-[17px]">
      <colgroup>
        <col className="w-[25px]" />
        <col className="w-[43px]" />
        <col className="w-[110px]" />
        <col className="w-[110px]" />
        <col className="w-[111px]" />
        <col className="w-[109px]" />
        <col className="w-[110px]" />
        <col className="w-[62px]" />
        <col />
      </colgroup>
      <thead className="text-[13px]">
        <tr>
          <th className={wHead} />
          <th className={wHead}>
            <span className="flex h-[17px] items-center pl-[3px] font-['Liberation_Serif',serif] text-base leading-[17px] font-bold text-[#14143c]">
              i
            </span>
          </th>
          {["名称", "地址", "显示格式", "监视值", "修改值"].map((h) => (
            <th key={h} className={wHead}>
              {h}
            </th>
          ))}
          <th className={wHead}>
            <Icon n="bolt" s={14} />
          </th>
          <th className={wHead}>注释</th>
        </tr>
      </thead>
      <tbody>
        {watch.map((r, k) => {
          const sel = k >= 4 && k <= 10;
          const bottom = k === 3 || k === 10 ? "border-b-[#4a6ab0]" : "border-b-white";
          const base = `h-[19px] border-b border-r border-r-white p-0 pl-[5px] whitespace-nowrap ${bottom}`;
          const body = `${base} ${sel ? "bg-[#c0cde8]" : "bg-[#efefef]"}`;
          const side = `${base} ${sel ? "bg-[#b0bfdc]" : "bg-[#e0e0e0]"}`;
          return (
            <tr key={k}>
              <td className={`h-[19px] border-b border-b-white p-0 pl-1 text-[#777] ${sel ? "bg-[#c0ccd6]" : "bg-[#c9c9c9]"}`}>{k + 1}</td>
              <td className={k === 4 ? `${base} bg-linear-to-r from-[#e0e0e0] from-50% to-[#b0bfdc] to-50%` : side} />
              <td className={body}>
                {k === 4 ? (
                  <span className="flex justify-end">
                    <button aria-label="选择变量" className="flex h-[17px] w-4 items-center justify-center border border-[#888] bg-[#f2f2f2]">
                      <svg viewBox="0 0 8 10" width="8" height="10" aria-hidden="true">
                        <path d="M0 1h1M2.500 1H8M0 3.500h1M2.500 3.500H8M0 6h1M2.500 6H8M0 8.500h1M2.500 8.500H8" stroke="#26317c" />
                      </svg>
                    </button>
                  </span>
                ) : (
                  r[0]
                )}
              </td>
              <td className={body}>{r[1]}</td>
              <td className={body}>
                <span className="flex items-center justify-between">
                  {r[2]}
                  {k === 4 && (
                    <button aria-label="选择格式" className="flex h-[17px] w-[17px] items-center justify-center border border-[#888] bg-[#f2f2f2]">
                      <svg viewBox="0 0 8 5" width="8" height="5" aria-hidden="true">
                        <path d="M0 0h8L4 5z" fill="#14147c" />
                      </svg>
                    </button>
                  )}
                </span>
              </td>
              <td className={sel ? body : `${base} bg-[#ffc562]`}>
                {r[3] === "FALSE" ? (
                  <span className="-ml-0.5 flex items-center gap-[5px]">
                    <i className="h-3 w-3 border border-[#26180c] bg-[#8d9cc4] shadow-[inset_0_0_0_1px_#eef]" />
                    {r[3]}
                  </span>
                ) : (
                  r[3]
                )}
              </td>
              <td className={body}>{r[4]}</td>
              <td className={side}>
                <span className="flex items-center gap-3 pl-[7px]">
                  <Check on={r[5]} label={`修改第 ${k + 1} 行`} />
                  {r[5] && <Icon n="warn" />}
                </span>
              </td>
              <td className={body} />
            </tr>
          );
        })}
        <tr className="text-[#8a8a8a]">
          <td className="h-[19px] border-b border-white bg-[#c9c9c9] p-0 pl-1">13</td>
          <td className="border-b border-r border-white bg-[#e0e0e0]" />
          <td className="border-b border-r border-white bg-[#efefef]" />
          <td className="border-b border-r border-white bg-[#efefef] p-0 pl-[5px]">&lt;添加&gt;</td>
          <td className="border-b border-r border-white bg-[#e0e0e0]" />
          <td className="border-b border-r border-white bg-[#e0e0e0]" />
          <td className="border-b border-r border-white bg-[#efefef]" />
          <td className="border-b border-r border-white bg-[#e0e0e0] p-0 pl-3">
            <Check on={false} label="修改第 13 行" />
          </td>
          <td className="border-b border-white bg-[#efefef]" />
        </tr>
        {Array.from({ length: 11 }, (_, k) => (
          <tr key={k}>
            <td className="h-[19px] border-b border-white bg-[#c9c9c9] p-0" />
            {Array.from({ length: 8 }, (_, c) => (
              <td key={c} className="border-b border-r border-white bg-[#efefef] p-0" />
            ))}
          </tr>
        ))}
      </tbody>
    </table>
  );
}

function MainWindow() {
  return (
    <section className="flex w-[56.35%] flex-col overflow-hidden bg-[#efefef]">
      <MenuAndToolbar />
      <div className="flex">
        <div className="flex w-[22px] shrink-0 flex-col bg-[#b0b0b0]">
          <div className="h-[25px] border-b border-white" />
          <div className="flex h-[221px] items-center justify-center border-b border-white">
            <span className="rotate-180 pl-px text-sm leading-5 font-bold text-white [writing-mode:vertical-rl]">PLC 编程</span>
          </div>
        </div>
        <ProjectTree />
        <div className="w-[3px] shrink-0 bg-[#1d2029]" />
        <div className="flex min-w-0 flex-1 flex-col">
          <div className="flex h-[27px] items-center gap-[11px] bg-[#ff9c00] pb-[3px] pl-[5px] text-[15px] font-bold text-white">
            <span>两地</span>
            <Chevron />
            <span className="text-[13px] font-semibold text-[#fffbe0]">PLC_1 [CPU 1211C DC/DC/DC]</span>
            <Chevron />
            <span>监控与强制表</span>
            <Chevron />
            <span>监控表_1</span>
          </div>
          <div className="h-[25px] border-b border-[#7c7c7c] bg-[#ccc]" />
          <div className="flex h-[28px] items-center bg-[#e8e8e8] pb-[2px] pl-[3px]">
            <Tool n="rowAdd" label="插入行" />
            <Tool n="rowIns" label="添加行" />
            <span className="w-px" />
            <Sep />
            <span className="w-[2px]" />
            <Tool n="comment" label="插入注释行" />
            <Sep />
            <span className="w-1" />
            <Tool n="listBolt" label="修改列" on />
            <Tool n="listClock" label="扩展模式" />
            <span className="w-[3px]" />
            <Sep />
            <span className="w-[3px]" />
            <Tool n="bolt1" label="立即修改" />
            <Tool n="boltClock" label="触发修改" />
            <Tool n="boltCheck" label="启用外设输出" />
            <span className="w-[2px]" />
            <Sep />
            <span className="w-1" />
            <Tool n="glassPlay" label="全部监视" on />
            <Tool n="glassOne" label="立即监视" />
          </div>
          <div className="h-[473px] overflow-hidden">
            <WatchTable />
          </div>
          <div className="h-[30px] border-b-[3px] border-t-[3px] border-b-[#eaa02c] border-t-[#1d2029] bg-[#b0b0b0]" />
          <div className="flex h-6 bg-[#ccc] pt-[3px]">
            <span className="w-[6px] border-b border-r border-[#7c7c7c]" />
            <button className="flex-1 border-t border-[#9a9a9a] bg-linear-to-b from-[#f6f6f6] to-[#e8e8e8] pb-[2px] pl-3 text-left text-[15px] font-bold leading-[18px]">
              设备信息
            </button>
          </div>
          <div className="h-6 bg-[#e8e8e8] pl-[25px] text-[15px] font-bold leading-6">所有设备均已连接</div>
          <div className="h-[128px] overflow-hidden">
            <table className="w-full table-fixed border-separate border-spacing-0 text-[13px] leading-[17px]">
              <colgroup>
                <col className="w-[68px]" />
                <col />
              </colgroup>
              <thead>
                <tr>
                  <th className="h-[19px] border-y border-r border-[#b2b2b2] bg-linear-to-b from-[#ebebeb] to-[#d2d2d2] p-0 font-normal">
                    <span className="flex items-center gap-[7px]">
                      <Icon n="wrench" />
                      在线...
                    </span>
                  </th>
                  <th className="h-[19px] border-y border-[#b2b2b2] bg-linear-to-b from-[#ebebeb] to-[#d2d2d2] p-0 pl-[3px]">
                    <Icon n="squares" s={14} />
                  </th>
                </tr>
              </thead>
              <tbody>
                {Array.from({ length: 6 }, (_, k) => (
                  <tr key={k}>
                    <td className="h-[19px] border-b border-r border-white bg-[#efefef] p-0" />
                    <td className="border-b border-white bg-[#efefef] p-0" />
                  </tr>
                ))}
              </tbody>
            </table>
          </div>
        </div>
      </div>
    </section>
  );
}

/* ---------- parameter window ---------- */

const pHead =
  "h-5 border-b border-r border-[#aeaeae] bg-linear-to-b from-[#ececec] to-[#cfcfcf] p-0 pl-1 text-left text-[13px] font-normal";

function ParamTable() {
  return (
    <table className="w-full table-fixed border-separate border-spacing-0 text-xs leading-[17px]">
      <colgroup>
        <col className="w-6" />
        <col className="w-[109px]" />
        <col className="w-[341px]" />
        <col />
        <col className="w-[182px]" />
      </colgroup>
      <thead>
        <tr>
          <th className={pHead} />
          <th className={pHead}>编号</th>
          <th className={`${pHead} from-[#eef0f3] to-[#d5dbe3]`}>参数文本</th>
          <th className={pHead}>值</th>
          <th className={pHead}>单位</th>
        </tr>
      </thead>
      <tbody>
        <tr>
          <td className="h-[19px] border-b border-r border-[#b4b4b4] bg-[#c9c9c9] p-0 pl-[2px]">
            <Icon n="filter" />
          </td>
          <td className="border-b border-r border-b-[#b4b4b4] border-r-white bg-[#efefef] p-0 pl-[23px]">&lt;全部&gt;</td>
          <td className="border-b border-r border-b-[#b4b4b4] border-r-white bg-[#efefef] p-0 pl-[5px]">&lt;全部&gt;</td>
          <td className="border-b border-r border-b-[#b4b4b4] border-r-white bg-[#e0e0e0] p-0 pl-1">&lt;全部&gt;</td>
          <td className="border-b border-b-[#b4b4b4] bg-[#efefef] p-0 pl-1">&lt;全部&gt;</td>
        </tr>
        {params.map(([id, text, val, unit]) => {
          const ro = id.startsWith("r");
          const cur = id === "p1300[0]";
          const base = "h-[19px] border-b border-r border-white p-0 pb-px whitespace-nowrap leading-4";
          const bg = ro ? "bg-[#e0e0e0]" : "bg-[#efefef]";
          return (
            <tr key={id} className="text-[#222]">
              <td className={`h-[19px] border-b border-r border-b-white border-r-[#b4b4b4] p-0 ${cur ? "bg-[#c0ccd6]" : "bg-[#c9c9c9]"}`} />
              <td className={`${base} ${bg}`}>
                <span className="flex items-center">
                  <span className="flex w-[23px] justify-center pr-[6px]">{id === "p1302[0]" && <Twist open={false} />}</span>
                  {id}
                </span>
              </td>
              <td className={cur ? "h-[19px] border border-[#3c62a4] bg-[#f1f4f8] p-0 pl-1 leading-4 text-black" : `${base} ${bg} pl-[5px] text-black`}>
                {text}
              </td>
              <td className={`${base} text-right ${ro ? "bg-[#e8d9c2]" : "bg-[#ffc562]"}`}>
                {cur ? (
                  <span className="flex items-center justify-end gap-[6px]">
                    {val}
                    <button aria-label="选择值" className="flex h-[17px] w-[17px] items-center justify-center border border-[#888] bg-[#e6ebf5]">
                      <svg viewBox="0 0 8 5" width="8" height="5" aria-hidden="true">
                        <path d="M0 0h8L4 5z" fill="#14147c" />
                      </svg>
                    </button>
                  </span>
                ) : (
                  <span className="pr-[5px]">{val}</span>
                )}
              </td>
              <td className={`${base} ${bg} pl-1`}>{unit}</td>
            </tr>
          );
        })}
      </tbody>
    </table>
  );
}

function ParamWindow() {
  return (
    <section className="absolute left-[20.73%] top-[381px] flex w-[67.14%] overflow-hidden">
      <div className="flex w-[5px] shrink-0 flex-col bg-[#b8bcc0]">
        <div className="h-[25px] border-b-[3px] border-[#e8a53c] bg-[#b0b0b0]" />
        <div className="h-[26px] border-b border-[#7c7c7c] bg-[#ccc]" />
        <div className="h-7 bg-[#e8e8e8]" />
        <div className="h-5 bg-[#bbb]" />
        <div className="h-[19px] border-y border-[#888] bg-[#ececec]" />
        <div className="h-[135px] border-b border-r border-[#888] bg-[#e8e8e8]" />
        <div className="flex-1" />
        <div className="h-[19px] border border-l-0 border-[#888] bg-[#ececec]" />
        <div className="h-[3px] bg-[#1d2029]" />
        <div className="h-[21px] border-b border-[#777] bg-[#ccc]" />
        <div className="h-[25px] border-b border-[#777]" />
        <div className="h-3 bg-[#e4e4e4]" />
      </div>
      <div className="w-[3px] shrink-0 bg-[#1d2029]" />
      <div className="flex min-w-0 flex-1 flex-col border-r border-[#1d2029] bg-[#efefef]">
        <div className="flex h-[26px] items-center gap-[10px] bg-[#ff9c00] pb-1 pl-[5px] pr-[6px] text-[15px] font-bold text-white">
          <span>两地</span>
          <Chevron />
          <span className="text-sm font-semibold text-[#fffbe0]">G120_CU250S_2_PN_VECTOR [G120 CU250S-2 PN Vector]</span>
          <Chevron />
          <span>参数</span>
          <span className="ml-auto flex items-center gap-[6px]">
            <button aria-label="最小化">
              <svg viewBox="0 0 12 12" width="12" height="12">
                <path d="M1 8.500h10V11H1z" fill="#fff" />
              </svg>
            </button>
            <button aria-label="浮动">
              <svg viewBox="0 0 12 12" width="12" height="12">
                <path d="M1 4h7v7H1z" fill="#fff" />
                <path d="M4 2h7v6" stroke="#fff" strokeWidth="2" fill="none" />
              </svg>
            </button>
            <button aria-label="最大化">
              <svg viewBox="0 0 12 12" width="12" height="12">
                <path d="M1 1h10v2H1zM1 4h10v7H1z" fill="#fff" />
              </svg>
            </button>
            <button aria-label="关闭">
              <svg viewBox="0 0 12 12" width="12" height="12">
                <path d="M1 1l10 10M11 1L1 11" stroke="#fff" strokeWidth="2" />
              </svg>
            </button>
          </span>
        </div>
        <div className="flex h-[25px] items-end justify-end gap-[2px] border-b border-[#7c7c7c] bg-[#ccc] pr-[5px] text-[15px] font-bold leading-[19px]">
          <button className="h-[21px] w-[95px] border border-b-0 border-[#7c7c7c] bg-linear-to-b from-[#e2e2e2] to-[#cfcfcf] pb-px pr-3 text-[#666]">
            功能视图
          </button>
          <button className="-mb-px h-[22px] w-[95px] border border-b-0 border-[#7c7c7c] bg-linear-to-b from-[#f6f6f6] to-[#e8e8e8] pb-[3px] pr-3">
            参数视图
          </button>
        </div>
        <div className="flex h-[30px] items-center border-b-[3px] border-[#999] bg-[#e8e8e8] pl-2 pt-px">
          <div className="relative flex h-[18px] w-[200px]">
            <select
              aria-label="参数显示"
              className="h-full w-full appearance-none border border-[#7388b4] bg-white pl-1 text-xs leading-4"
              defaultValue="ext"
            >
              <option value="ext">显示扩展参数</option>
            </select>
            <span className="pointer-events-none absolute inset-y-px right-px flex w-4 items-center justify-center border-l border-[#7388b4] bg-[#e0e0e0]">
              <svg viewBox="0 0 8 5" width="8" height="5" aria-hidden="true">
                <path d="M0 0h8L4 5z" fill="#111" />
              </svg>
            </span>
          </div>
          <span className="w-[6px]" />
          <Sep />
          <span className="w-[2px]" />
          <Tool n="balance" label="比较" />
          <UpDown />
          <span className="w-1" />
          <Tool n="paramGo" label="参数" />
        </div>
        <div className="flex h-[471px] overflow-hidden">
          <div className="flex w-[299px] shrink-0 flex-col overflow-hidden">
            <div className="h-[18px] shrink-0 bg-[#d8d8d8]" />
            <div className="flex min-h-0 flex-1">
              <ul className="min-w-0 flex-1 overflow-hidden pt-px text-xs leading-[17px]">
                {groups.map((g, k) => (
                  <li
                    key={k}
                    className={`flex h-[19px] items-center gap-1 border-b border-[#e6e6e6] whitespace-nowrap ${g.l ? "pl-5" : "pl-1"}`}
                  >
                    {g.o === undefined ? <span className="w-[10px] shrink-0" /> : <Twist open={g.o} />}
                    <span className={k === 0 ? "-ml-px bg-[#c8d0dc] px-px" : ""}>{g.t}</span>
                  </li>
                ))}
              </ul>
              <div className="flex w-[18px] flex-col bg-[#bdbdbd] py-px">
                <ScrollBtn up />
                <div className="mt-px flex h-[306px] shrink-0 items-center justify-center border border-[#8a8a8a] bg-linear-to-r from-[#f4f4f4] to-[#dadada]">
                  <Grip />
                </div>
                <span className="flex-1" />
                <ScrollBtn />
              </div>
            </div>
          </div>
          <div className="flex w-[7px] shrink-0 flex-col justify-center gap-[22px] border-x border-[#8a8a8a] bg-[#e4e4e4]">
            <svg viewBox="0 0 4 8" width="4" height="10" aria-hidden="true">
              <path d="M4 0v8L0 4z" fill="#111" />
            </svg>
            <svg viewBox="0 0 4 8" width="4" height="10" aria-hidden="true">
              <path d="M0 0v8l4-4z" fill="#111" />
            </svg>
          </div>
          <div className="min-w-0 flex-1">
            <ParamTable />
          </div>
          <div className="flex w-[18px] shrink-0 flex-col bg-[#bdbdbd]">
            <div className="h-5 border-b border-[#aeaeae] bg-linear-to-b from-[#ececec] to-[#cfcfcf]" />
            <ScrollBtn up />
            <span className="h-[162px]" />
            <div className="flex h-[18px] items-center justify-center border border-[#8a8a8a] bg-[#ececec]">
              <Grip />
            </div>
            <span className="flex-1" />
            <ScrollBtn />
          </div>
        </div>
        <div className="flex h-[32px] items-start justify-end gap-[7px] border-b-[5px] border-t-[3px] border-b-[#eaa02c] border-t-[#1d2029] bg-[#b0b0b0] pr-[5px] pt-[6px]">
          <svg viewBox="0 0 11 11" width="11" height="11" aria-hidden="true">
            <path d="M.5 .5h10v10H.5zM2 4h7M2 7h7" stroke="#fff" fill="none" />
          </svg>
          <svg viewBox="0 0 12 8" width="12" height="11" aria-hidden="true">
            <path d="M0 0h12L6 8z" fill="#fff" />
          </svg>
        </div>
      </div>

      <div className="pointer-events-none absolute left-[364px] top-[124px] w-[400px] -rotate-30 text-center whitespace-nowrap font-bold text-white/40 [-webkit-text-stroke:1px_rgba(160,160,160,0.28)]">
        <div className="text-[41px] leading-[44px]">西门子工业技术论坛</div>
        <div className="text-[24px] leading-[28px]">support.industry.siemens.com/cs</div>
      </div>

      <div role="tooltip" className="absolute bottom-0 right-[42px] top-[386px] w-[596px] overflow-hidden border border-b-0 border-[#cfc66a] bg-[#fdf7a0] text-xs">
        <div className="flex h-[18px] items-center gap-[3px] border-b border-[#d8cf72] pb-[2px] pl-[2px] leading-4">
          <svg viewBox="0 0 12 8" width="12" height="8" className="mt-[6px]" aria-hidden="true">
            <path d="M0 0h12L6 8z" fill="#111" />
          </svg>
          永续起动电流（电压提升）
        </div>
        <div className="pl-[3px] pt-[5px] leading-4">
          {help.map((h) => (
            <p key={h} className="h-4 whitespace-pre">
              <MonoMix text={h} />
            </p>
          ))}
        </div>
      </div>
    </section>
  );
}

export default function App() {
  return (
    <div className="relative min-h-screen overflow-hidden bg-white font-['Open_Sans','Noto_Sans_CJK_SC',sans-serif] text-black">
      <MainWindow />
      <ParamWindow />
    </div>
  );
}
